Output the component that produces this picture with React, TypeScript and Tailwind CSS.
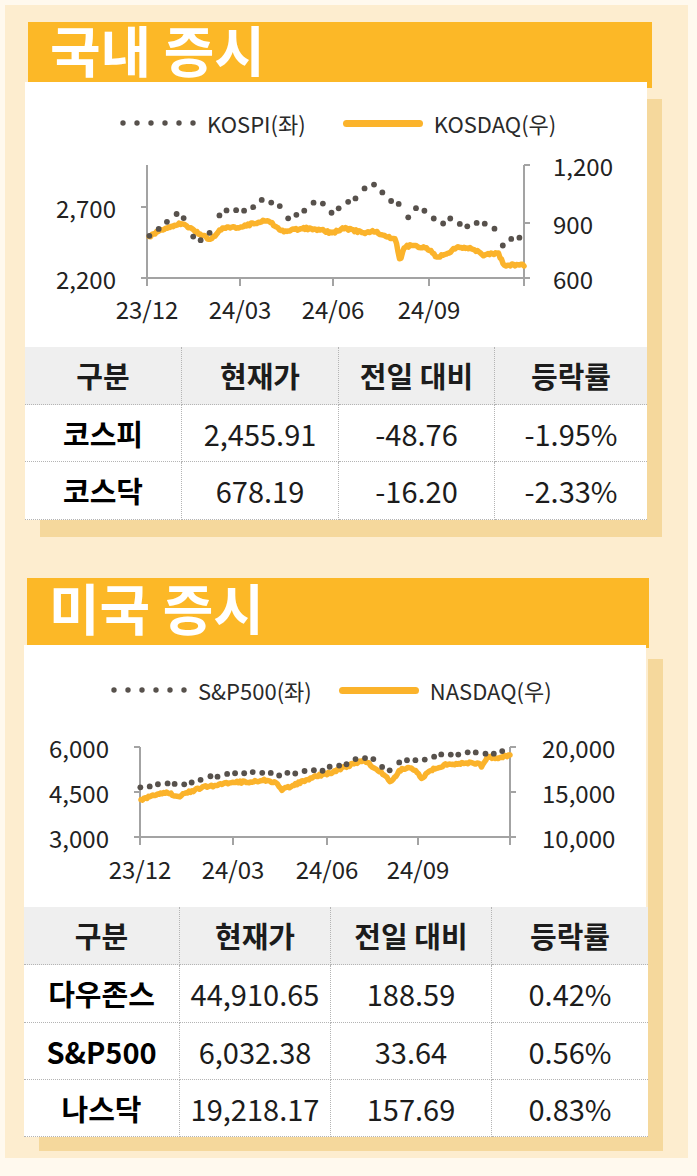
import React from "react"

type Pt = [number, number]

const FONT = "font-['Noto_Sans_CJK_KR','Noto_Sans',sans-serif]"

// traced from the reference, in page pixels
const KOSPI: Pt[] = [
  [150, 236], [153, 233], [169, 220], [178, 213], [187, 222], [196, 242], [209, 235],
  [213, 220], [227, 210], [240, 212], [253, 207], [262, 200], [273, 202], [282, 208],
  [289, 220], [302, 212], [311, 202], [329, 203], [333, 217], [342, 205], [356, 197],
  [369, 185], [378, 183], [382, 193], [391, 200], [398, 198], [402, 237], [404, 223],
  [416, 208], [427, 212], [440, 225], [453, 218], [464, 227], [471, 223], [493, 225],
  [504, 247], [516, 233], [522, 243],
]

const KOSDAQ: Pt[] = [
  [149, 237], [160, 230], [182, 223], [196, 232], [211, 240], [222, 228], [240, 227],
  [267, 220], [284, 232], [302, 228], [320, 230], [333, 233], [344, 228], [364, 233],
  [373, 231], [396, 240], [400, 262], [404, 247], [413, 245], [431, 250], [436, 258],
  [449, 252], [458, 247], [471, 248], [484, 255], [498, 253], [504, 265], [524, 265],
]

const SP500: Pt[] = [
  [141, 788], [153, 785], [164, 783], [178, 785], [191, 782], [200, 780], [211, 776],
  [222, 777], [233, 773], [244, 773], [256, 772], [267, 772], [278, 776], [289, 773],
  [298, 772], [311, 769], [322, 770], [333, 767], [347, 763], [360, 758], [369, 757],
  [378, 763], [391, 772], [400, 762], [411, 759], [420, 762], [431, 757], [444, 755],
  [462, 753], [480, 753], [493, 753], [509, 749],
]

const NASDAQ: Pt[] = [
  [141, 800], [153, 795], [167, 792], [178, 797], [189, 792], [204, 787], [218, 785],
  [231, 782], [249, 782], [267, 780], [276, 783], [282, 790], [293, 785], [307, 780],
  [320, 775], [331, 773], [342, 768], [356, 763], [364, 760], [373, 767], [382, 773],
  [391, 782], [400, 770], [411, 767], [422, 778], [431, 770], [444, 765], [462, 763],
  [478, 763], [482, 767], [487, 757], [496, 758], [511, 755],
]

function noise(i: number) {
  const s = Math.sin(i * 12.9898 + 78.233) * 43758.5453
  return s - Math.floor(s) - 0.5
}

function yAt(pts: Pt[], x: number) {
  for (let i = 1; i < pts.length; i++) {
    if (x <= pts[i][0]) {
      const [x0, y0] = pts[i - 1]
      const [x1, y1] = pts[i]
      const t = (x - x0) / (x1 - x0 || 1)
      return y0 + (y1 - y0) * t
    }
  }
  return pts[pts.length - 1][1]
}

function dotSeries(pts: Pt[], step: number, jitter: number): Pt[] {
  const out: Pt[] = []
  const end = pts[pts.length - 1][0]
  let i = 0
  for (let x = pts[0][0]; x <= end; x += step) {
    const dx = x + noise(i * 3.1) * 2
    out.push([dx, yAt(pts, dx) + noise(i) * jitter])
    i++
  }
  return out
}

function linePath(pts: Pt[], step: number, jitter: number) {
  const end = pts[pts.length - 1][0]
  let d = ""
  let i = 0
  for (let x = pts[0][0]; x <= end; x += step) {
    const y = yAt(pts, x) + noise(i + 500) * jitter
    d += `${i === 0 ? "M" : "L"}${x.toFixed(1)} ${y.toFixed(1)} `
    i++
  }
  return d
}

type Tick = { y: number; label: string }

type ChartProps = {
  box: [number, number, number, number]
  left: number
  right: number
  top: number
  bottom: number
  xTicks: number[]
  xLabels: string[]
  leftTicks: Tick[]
  rightTicks: Tick[]
  leftLabelX: number
  rightLabelX: number
  xLabelY: number
  dots: Pt[]
  line: Pt[]
}

function Chart(props: ChartProps) {
  const [bx, by, bw, bh] = props.box
  const axis = "#a3a3a3"
  return (
    <svg width={bw} height={bh} viewBox={`${bx} ${by} ${bw} ${bh}`} className="block">
      <line x1={props.left} y1={props.top} x2={props.left} y2={props.bottom} stroke={axis} strokeWidth={2} />
      <line x1={props.right} y1={props.top} x2={props.right} y2={props.bottom + 8} stroke={axis} strokeWidth={2} />
      <line x1={props.left - 6} y1={props.bottom} x2={props.right} y2={props.bottom} stroke={axis} strokeWidth={2} />
      {props.xTicks.map((x) => (
        <line key={x} x1={x} y1={props.bottom} x2={x} y2={props.bottom + 8} stroke={axis} strokeWidth={2} />
      ))}
      {props.leftTicks.map((t) => (
        <line key={t.label} x1={props.left - 6} y1={t.y} x2={props.left} y2={t.y} stroke={axis} strokeWidth={2} />
      ))}
      {props.rightTicks.map((t) => (
        <line key={t.label} x1={props.right} y1={t.y} x2={props.right + 6} y2={t.y} stroke={axis} strokeWidth={2} />
      ))}
      <path
        d={linePath(props.line, 1.5, 2.2)}
        fill="none"
        stroke="#fbb32b"
        strokeWidth={5.5}
        strokeLinejoin="round"
        strokeLinecap="round"
      />
      {dotSeries(props.dots, 8.6, 2.5).map(([x, y], i) => (
        <circle key={i} cx={x} cy={y} r={2.9} fill="#57514c" />
      ))}
      {props.leftTicks.map((t) => (
        <text key={t.label} x={props.leftLabelX} y={t.y} textAnchor="end" dominantBaseline="central" fontSize={24} fill="#222">
          {t.label}
        </text>
      ))}
      {props.rightTicks.map((t) => (
        <text key={t.label} x={props.rightLabelX} y={t.y} dominantBaseline="central" fontSize={24} fill="#222">
          {t.label}
        </text>
      ))}
      {props.xLabels.map((l, i) => (
        <text key={l} x={props.xTicks[i]} y={props.xLabelY} textAnchor="middle" dominantBaseline="central" fontSize={24} fill="#222">
          {l}
        </text>
      ))}
    </svg>
  )
}

function Legend({ dotLabel, lineLabel, pad, gap }: { dotLabel: string; lineLabel: string; pad: string; gap: string }) {
  return (
    <div className={`flex h-full items-center ${pad} text-[22px] leading-none text-[#2a2a2a]`}>
      <svg width={76} height={8} className="mr-[11px]">
        {[0, 1, 2, 3, 4, 5].map((i) => (
          <circle key={i} cx={3 + i * 14} cy={4} r={2.7} fill="#57514c" />
        ))}
      </svg>
      <span>{dotLabel}</span>
      <span className={`${gap} mr-[11px] h-[7px] w-[80px] rounded-full bg-[#fbb32b]`} />
      <span>{lineLabel}</span>
    </div>
  )
}

type Row = [string, string, string, string]

function DataTable({ cols, heights, rows }: { cols: string; heights: number[]; rows: Row[] }) {
  const all: Row[] = [["구분", "현재가", "전일 대비", "등락률"], ...rows]
  return (
    <div className={`grid ${cols} bg-white`}>
      {all.map((row, r) =>
        row.map((cell, c) => (
          <div
            key={`${r}-${c}`}
            style={{ height: heights[r] }}
            className={`flex items-center justify-center border-b border-dotted border-[#b4b4b4] text-[29px] leading-none text-[#1c1c1c] ${
              c < 3 ? "border-r" : ""
            } ${r === 0 ? "bg-[#efefef] font-semibold" : "bg-white"} ${r > 0 && c === 0 ? "font-bold text-black" : ""}`}
          >
            {cell}
          </div>
        ))
      )}
    </div>
  )
}

function TitleBar({ text, className }: { text: string; className: string }) {
  return (
    <div className={`flex items-center bg-[#fcb827] pl-[22px] ${className}`}>
      <span className="text-[55px] font-bold leading-none text-white">{text}</span>
    </div>
  )
}

export default function App() {
  return (
    <div className={`h-[1176px] w-[697px] bg-[#fff9ee] pl-[5px] pt-[5px] ${FONT}`}>
      <div className="h-[1153px] w-[683px] overflow-hidden bg-[#fdedcf] pt-[17px]">
        {/* 국내 증시 */}
        <TitleBar text="국내 증시" className="ml-[23px] h-[66px] w-[624px] pb-[13px]" />
        <div className="relative z-10 -mt-[6px] ml-[20px] w-[622px] shadow-[15px_17px_0_0_#f5d89c]">
          <div className="h-[265px] bg-white">
            <div className="h-[62px] pt-[20px]">
              <Legend dotLabel="KOSPI(좌)" lineLabel="KOSDAQ(우)" pad="pl-[95px]" gap="ml-[37px]" />
            </div>
            <Chart
              box={[25, 144, 622, 203]}
              left={147}
              right={524}
              top={165}
              bottom={278}
              xTicks={[147, 240, 333, 429, 524]}
              xLabels={["23/12", "24/03", "24/06", "24/09"]}
              leftTicks={[
                { y: 207, label: "2,700" },
                { y: 278, label: "2,200" },
              ]}
              rightTicks={[
                { y: 165, label: "1,200" },
                { y: 223, label: "900" },
                { y: 278, label: "600" },
              ]}
              leftLabelX={116}
              rightLabelX={553}
              xLabelY={308}
              dots={KOSPI}
              line={KOSDAQ}
            />
          </div>
          <DataTable
            cols="grid-cols-[157px_157px_156px_152px]"
            heights={[58, 57, 58]}
            rows={[
              ["코스피", "2,455.91", "-48.76", "-1.95%"],
              ["코스닥", "678.19", "-16.20", "-2.33%"],
            ]}
          />
        </div>

        {/* 미국 증시 */}
        <TitleBar text="미국 증시" className="ml-[22px] mt-[58px] h-[70px] w-[622px] pb-[14px]" />
        <div className="relative z-10 -mt-[3px] ml-[19px] w-[624px] shadow-[15px_14px_0_0_#f5d89c]">
          <div className="h-[262px] w-[622px] bg-white">
            <div className="h-[67px] pt-[23px]">
              <Legend dotLabel="S&P500(좌)" lineLabel="NASDAQ(우)" pad="pl-[87px]" gap="ml-[27px]" />
            </div>
            <Chart
              box={[24, 712, 622, 195]}
              left={140}
              right={510}
              top={747}
              bottom={837}
              xTicks={[140, 233, 327, 418, 510]}
              xLabels={["23/12", "24/03", "24/06", "24/09"]}
              leftTicks={[
                { y: 747, label: "6,000" },
                { y: 792, label: "4,500" },
                { y: 837, label: "3,000" },
              ]}
              rightTicks={[
                { y: 747, label: "20,000" },
                { y: 792, label: "15,000" },
                { y: 837, label: "10,000" },
              ]}
              leftLabelX={109}
              rightLabelX={542}
              xLabelY={868}
              dots={SP500}
              line={NASDAQ}
            />
          </div>
          <DataTable
            cols="grid-cols-[156px_151px_161px_156px]"
            heights={[58, 58, 57, 57]}
            rows={[
              ["다우존스", "44,910.65", "188.59", "0.42%"],
              ["S&P500", "6,032.38", "33.64", "0.56%"],
              ["나스닥", "19,218.17", "157.69", "0.83%"],
            ]}
          />
        </div>
      </div>
    </div>
  )
}
